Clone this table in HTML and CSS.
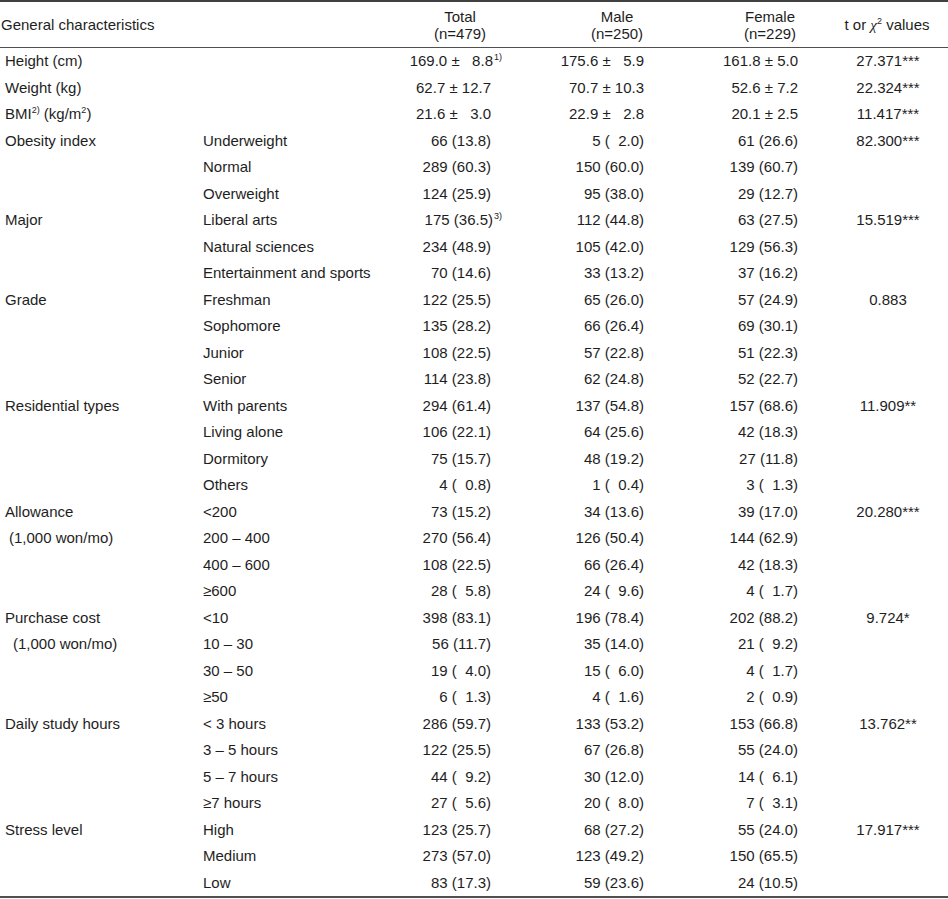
FILE: index.html
```html
<!DOCTYPE html>
<html>
<head>
<meta charset="utf-8">
<link rel="stylesheet" href="styles.css">
</head>
<body>
<table class="tbl">
<colgroup>
<col class="c1"><col class="c2"><col class="c3"><col class="c4"><col class="c5"><col class="c6">
</colgroup>
<thead>
<tr>
<th class="h-left" colspan="2">General characteristics</th>
<th class="h-num">Total<br>(n=479)</th>
<th class="h-num">Male<br>(n=250)</th>
<th class="h-num">Female<br>(n=229)</th>
<th class="h-num">t or <span class="chi">χ</span><sup class="sq">2</sup> values</th>
</tr>
</thead>
<tbody>
<tr><td class="lab">Height (cm)</td><td></td><td class="v t">169.0 ± &#8199;8.8<sup class="note">1)</sup></td><td class="v m">175.6 ± &#8199;5.9</td><td class="v f">161.8 ± 5.0</td><td class="tv">27.371***</td></tr>
<tr><td class="lab">Weight (kg)</td><td></td><td class="v t">62.7 ± 12.7</td><td class="v m">70.7 ± 10.3</td><td class="v f">52.6 ± 7.2</td><td class="tv">22.324***</td></tr>
<tr><td class="lab">BMI<sup class="note2">2)</sup> (kg/m<sup class="note2">2</sup>)</td><td></td><td class="v t">21.6 ± &#8199;3.0</td><td class="v m">22.9 ± &#8199;2.8</td><td class="v f">20.1 ± 2.5</td><td class="tv">11.417***</td></tr>

<tr><td class="lab">Obesity index</td><td class="sub">Underweight</td><td class="v t">66 (13.8)</td><td class="v m">5 (&#8199;2.0)</td><td class="v f">61 (26.6)</td><td class="tv">82.300***</td></tr>
<tr><td></td><td class="sub">Normal</td><td class="v t">289 (60.3)</td><td class="v m">150 (60.0)</td><td class="v f">139 (60.7)</td><td></td></tr>
<tr><td></td><td class="sub">Overweight</td><td class="v t">124 (25.9)</td><td class="v m">95 (38.0)</td><td class="v f">29 (12.7)</td><td></td></tr>

<tr><td class="lab">Major</td><td class="sub">Liberal arts</td><td class="v t">175 (36.5)<sup class="note">3)</sup></td><td class="v m">112 (44.8)</td><td class="v f">63 (27.5)</td><td class="tv">15.519***</td></tr>
<tr><td></td><td class="sub">Natural sciences</td><td class="v t">234 (48.9)</td><td class="v m">105 (42.0)</td><td class="v f">129 (56.3)</td><td></td></tr>
<tr><td></td><td class="sub">Entertainment and sports</td><td class="v t">70 (14.6)</td><td class="v m">33 (13.2)</td><td class="v f">37 (16.2)</td><td></td></tr>

<tr><td class="lab">Grade</td><td class="sub">Freshman</td><td class="v t">122 (25.5)</td><td class="v m">65 (26.0)</td><td class="v f">57 (24.9)</td><td class="tv">0.883</td></tr>
<tr><td></td><td class="sub">Sophomore</td><td class="v t">135 (28.2)</td><td class="v m">66 (26.4)</td><td class="v f">69 (30.1)</td><td></td></tr>
<tr><td></td><td class="sub">Junior</td><td class="v t">108 (22.5)</td><td class="v m">57 (22.8)</td><td class="v f">51 (22.3)</td><td></td></tr>
<tr><td></td><td class="sub">Senior</td><td class="v t">114 (23.8)</td><td class="v m">62 (24.8)</td><td class="v f">52 (22.7)</td><td></td></tr>

<tr><td class="lab">Residential types</td><td class="sub">With parents</td><td class="v t">294 (61.4)</td><td class="v m">137 (54.8)</td><td class="v f">157 (68.6)</td><td class="tv">11.909**</td></tr>
<tr><td></td><td class="sub">Living alone</td><td class="v t">106 (22.1)</td><td class="v m">64 (25.6)</td><td class="v f">42 (18.3)</td><td></td></tr>
<tr><td></td><td class="sub">Dormitory</td><td class="v t">75 (15.7)</td><td class="v m">48 (19.2)</td><td class="v f">27 (11.8)</td><td></td></tr>
<tr><td></td><td class="sub">Others</td><td class="v t">4 (&#8199;0.8)</td><td class="v m">1 (&#8199;0.4)</td><td class="v f">3 (&#8199;1.3)</td><td></td></tr>

<tr><td class="lab">Allowance</td><td class="sub">&lt;200</td><td class="v t">73 (15.2)</td><td class="v m">34 (13.6)</td><td class="v f">39 (17.0)</td><td class="tv">20.280***</td></tr>
<tr><td class="lab2">(1,000 won/mo)</td><td class="sub">200 – 400</td><td class="v t">270 (56.4)</td><td class="v m">126 (50.4)</td><td class="v f">144 (62.9)</td><td></td></tr>
<tr><td></td><td class="sub">400 – 600</td><td class="v t">108 (22.5)</td><td class="v m">66 (26.4)</td><td class="v f">42 (18.3)</td><td></td></tr>
<tr><td></td><td class="sub">≥600</td><td class="v t">28 (&#8199;5.8)</td><td class="v m">24 (&#8199;9.6)</td><td class="v f">4 (&#8199;1.7)</td><td></td></tr>

<tr><td class="lab">Purchase cost</td><td class="sub">&lt;10</td><td class="v t">398 (83.1)</td><td class="v m">196 (78.4)</td><td class="v f">202 (88.2)</td><td class="tv">9.724*</td></tr>
<tr><td class="lab3">(1,000 won/mo)</td><td class="sub">10 – 30</td><td class="v t">56 (11.7)</td><td class="v m">35 (14.0)</td><td class="v f">21 (&#8199;9.2)</td><td></td></tr>
<tr><td></td><td class="sub">30 – 50</td><td class="v t">19 (&#8199;4.0)</td><td class="v m">15 (&#8199;6.0)</td><td class="v f">4 (&#8199;1.7)</td><td></td></tr>
<tr><td></td><td class="sub">≥50</td><td class="v t">6 (&#8199;1.3)</td><td class="v m">4 (&#8199;1.6)</td><td class="v f">2 (&#8199;0.9)</td><td></td></tr>

<tr><td class="lab">Daily study hours</td><td class="sub">&lt; 3 hours</td><td class="v t">286 (59.7)</td><td class="v m">133 (53.2)</td><td class="v f">153 (66.8)</td><td class="tv">13.762**</td></tr>
<tr><td></td><td class="sub">3 – 5 hours</td><td class="v t">122 (25.5)</td><td class="v m">67 (26.8)</td><td class="v f">55 (24.0)</td><td></td></tr>
<tr><td></td><td class="sub">5 – 7 hours</td><td class="v t">44 (&#8199;9.2)</td><td class="v m">30 (12.0)</td><td class="v f">14 (&#8199;6.1)</td><td></td></tr>
<tr><td></td><td class="sub">≥7 hours</td><td class="v t">27 (&#8199;5.6)</td><td class="v m">20 (&#8199;8.0)</td><td class="v f">7 (&#8199;3.1)</td><td></td></tr>

<tr><td class="lab">Stress level</td><td class="sub">High</td><td class="v t">123 (25.7)</td><td class="v m">68 (27.2)</td><td class="v f">55 (24.0)</td><td class="tv">17.917***</td></tr>
<tr><td></td><td class="sub">Medium</td><td class="v t">273 (57.0)</td><td class="v m">123 (49.2)</td><td class="v f">150 (65.5)</td><td></td></tr>
<tr><td></td><td class="sub">Low</td><td class="v t">83 (17.3)</td><td class="v m">59 (23.6)</td><td class="v f">24 (10.5)</td><td></td></tr>
</tbody>
</table>
</body>
</html>
```

FILE: styles.css
```css
html, body {
  margin: 0;
  padding: 0;
  background: #ffffff;
}

body {
  font-family: "Liberation Sans", Arial, sans-serif;
  font-size: 15px;
  color: #1e1e1e;
}

.tbl {
  width: 948px;
  border-collapse: collapse;
  table-layout: fixed;
  border-top: 2px solid #404040;
  border-bottom: 2px solid #505050;
}

.c1 { width: 200px; }
.c2 { width: 200px; }
.c3 { width: 120px; }
.c4 { width: 194px; }
.c5 { width: 112px; }
.c6 { width: 122px; }

thead th {
  height: 45px;
  padding: 0;
  font-weight: normal;
  line-height: 17px;
  border-bottom: 1px solid #505050;
  vertical-align: middle;
}

.h-left {
  text-align: left;
  padding-left: 1px;
}

.h-num {
  text-align: center;
}

.chi {
  font-family: "Liberation Serif", "Times New Roman", serif;
  font-style: italic;
  font-size: 15px;
}

.sq {
  font-size: 9px;
  vertical-align: 6px;
  line-height: 0;
}

tbody td {
  height: 26.5px;
  padding: 0;
  line-height: 26.5px;
  white-space: nowrap;
  vertical-align: middle;
}

.lab {
  padding-left: 5px;
}

.lab2 {
  padding-left: 9px;
}

.lab3 {
  padding-left: 13px;
}

.sub {
  padding-left: 3px;
}

.v {
  text-align: right;
}

.v.t { padding-right: 29px; }
.v.m { padding-right: 70px; }
.v.f { padding-right: 28px; }

.tv {
  text-align: center;
  padding-left: 2px;
}

.note {
  font-size: 9px;
  vertical-align: 6px;
  line-height: 0;
  margin-right: -11px;
  margin-left: 1px;
}

.note2 {
  font-size: 9px;
  vertical-align: 6px;
  line-height: 0;
}
```
